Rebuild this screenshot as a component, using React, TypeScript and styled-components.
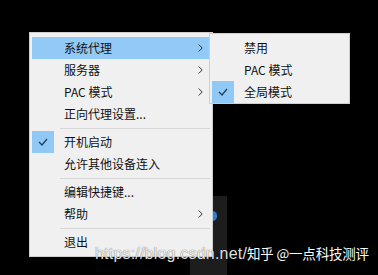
import React from 'react';
import styled, { createGlobalStyle } from 'styled-components';

const Global = createGlobalStyle`
  html, body {
    margin: 0;
    padding: 0;
    background: #000;
  }
`;

const Desktop = styled.div`
  position: relative;
  width: 378px;
  height: 275px;
  overflow: hidden;
  background: #000;
  display: flex;
  align-items: flex-start;
  padding: 32px 0 0 29px;
  box-sizing: border-box;
  font-family: 'Noto Sans CJK SC', 'Noto Sans', sans-serif;
  font-size: 12px;
  color: #000;
`;

const TrayWindow = styled.div`
  position: absolute;
  left: 190px;
  top: 196px;
  width: 37px;
  height: 79px;
  background: #1d1d1d;
`;

const TrayDot = styled.div`
  position: absolute;
  left: 208px;
  top: 211px;
  width: 9px;
  height: 10px;
  border-radius: 5px;
  background: #2f7fd8;
`;

const Menu = styled.div<{ $width: number; $sub?: boolean }>`
  position: relative;
  z-index: ${(p) => (p.$sub ? 2 : 1)};
  width: ${(p) => p.$width}px;
  box-sizing: border-box;
  background: #f0f0f0;
  border: 1px solid #cfcfcf;
  padding: ${(p) => (p.$sub ? '3px 2px 0' : '4px 2px 3px')};
  margin: ${(p) => (p.$sub ? '1px 0 0 -4px' : '0')};
`;

const Item = styled.div<{ $active?: boolean }>`
  display: grid;
  grid-template-columns: 22px 1fr 20px;
  align-items: center;
  height: 22px;
  background: ${(p) => (p.$active ? '#91c9f7' : 'transparent')};
`;

const CheckCell = styled.div<{ $checked?: boolean }>`
  height: 22px;
  display: flex;
  align-items: center;
  justify-content: center;
  background: ${(p) => (p.$checked ? '#90c8f6' : 'transparent')};
`;

const Label = styled.span`
  padding-left: 10px;
  line-height: 22px;
  white-space: nowrap;
  color: #111;
`;

const ArrowCell = styled.div`
  display: flex;
  align-items: center;
  justify-content: center;
`;

const Separator = styled.div`
  height: 6px;
  margin-left: 28px;
  display: flex;
  align-items: center;
  &::after {
    content: '';
    flex: 1;
    height: 1px;
    background: #d7d7d7;
  }
`;

const Watermark = styled.div`
  position: absolute;
  left: 95px;
  top: 243px;
  z-index: 5;
  display: flex;
  align-items: baseline;
  white-space: nowrap;
`;

const CsdnMark = styled.span`
  font-family: 'Liberation Sans', sans-serif;
  font-size: 16px;
  letter-spacing: 0.2px;
  color: rgba(255, 255, 255, 0.88);
  text-shadow: 0 0 1px rgba(0, 0, 0, 0.7);
`;

const ZhihuMark = styled.span`
  font-family: 'Noto Sans CJK SC', sans-serif;
  font-size: 13.5px;
  letter-spacing: -0.2px;
  color: #fff;
  text-shadow: 0 0 1px rgba(0, 0, 0, 0.8);
`;

function Check() {
  return (
    <svg width="10" height="8" viewBox="0 0 10 8">
      <path d="M1 4 L4 7 L9 1" fill="none" stroke="#1f3e5e" strokeWidth="1.3" />
    </svg>
  );
}

function Chevron() {
  return (
    <svg width="5" height="8" viewBox="0 0 5 8">
      <path d="M0.7 0.5 L4.2 4 L0.7 7.5" fill="none" stroke="#333" strokeWidth="1" />
    </svg>
  );
}

type Entry =
  | { kind: 'sep' }
  | { kind: 'item'; label: string; sub?: boolean; checked?: boolean; active?: boolean };

const mainItems: Entry[] = [
  { kind: 'item', label: '系统代理', sub: true, active: true },
  { kind: 'item', label: '服务器', sub: true },
  { kind: 'item', label: 'PAC 模式', sub: true },
  { kind: 'item', label: '正向代理设置...' },
  { kind: 'sep' },
  { kind: 'item', label: '开机启动', checked: true },
  { kind: 'item', label: '允许其他设备连入' },
  { kind: 'sep' },
  { kind: 'item', label: '编辑快捷键...' },
  { kind: 'item', label: '帮助', sub: true },
  { kind: 'sep' },
  { kind: 'item', label: '退出' },
];

const proxyItems: Entry[] = [
  { kind: 'item', label: '禁用' },
  { kind: 'item', label: 'PAC 模式' },
  { kind: 'item', label: '全局模式', checked: true },
];

function MenuList({ items }: { items: Entry[] }) {
  return (
    <>
      {items.map((e, i) =>
        e.kind === 'sep' ? (
          <Separator key={i} />
        ) : (
          <Item key={i} $active={e.active}>
            <CheckCell $checked={e.checked}>{e.checked && <Check />}</CheckCell>
            <Label>{e.label}</Label>
            <ArrowCell>{e.sub && <Chevron />}</ArrowCell>
          </Item>
        )
      )}
    </>
  );
}

export default function App() {
  return (
    <Desktop>
      <Global />
      <TrayWindow />
      <TrayDot />
      <Menu $width={184}>
        <MenuList items={mainItems} />
      </Menu>
      <Menu $width={141} $sub>
        <MenuList items={proxyItems} />
      </Menu>
      <Watermark>
        <CsdnMark>https://blog.csdn.net/</CsdnMark>
        <ZhihuMark>知乎 @一点科技测评</ZhihuMark>
      </Watermark>
    </Desktop>
  );
}
